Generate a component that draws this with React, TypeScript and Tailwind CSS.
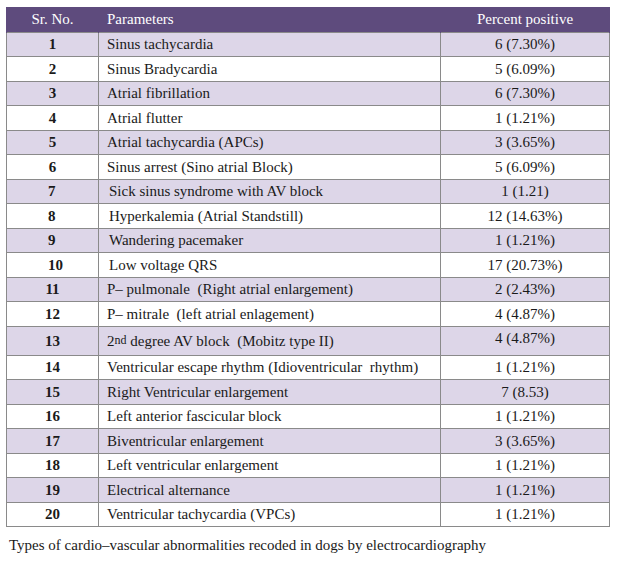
const rows: [string, React.ReactNode, string][] = [
  ["1", "Sinus tachycardia", "6 (7.30%)"],
  ["2", "Sinus Bradycardia", "5 (6.09%)"],
  ["3", "Atrial fibrillation", "6 (7.30%)"],
  ["4", "Atrial flutter", "1 (1.21%)"],
  ["5", "Atrial tachycardia (APCs)", "3 (3.65%)"],
  ["6", "Sinus arrest (Sino atrial Block)", "5 (6.09%)"],
  ["7", "Sick sinus syndrome with AV block", "1 (1.21)"],
  ["8", "Hyperkalemia (Atrial Standstill)", "12 (14.63%)"],
  ["9", "Wandering pacemaker", "1 (1.21%)"],
  ["10", "Low voltage QRS", "17 (20.73%)"],
  ["11", "P– pulmonale  (Right atrial enlargement)", "2 (2.43%)"],
  ["12", "P– mitrale  (left atrial enlagement)", "4 (4.87%)"],
  [
    "13",
    <>
      2<sup className="text-[12px] relative -top-[2px]">nd</sup> degree AV block  (Mobitz type II)
    </>,
    "4 (4.87%)",
  ],
  ["14", "Ventricular escape rhythm (Idioventricular  rhythm)", "1 (1.21%)"],
  ["15", "Right Ventricular enlargement", "7 (8.53)"],
  ["16", "Left anterior fascicular block", "1 (1.21%)"],
  ["17", "Biventricular enlargement", "3 (3.65%)"],
  ["18", "Left ventricular enlargement", "1 (1.21%)"],
  ["19", "Electrical alternance", "1 (1.21%)"],
  ["20", "Ventricular tachycardia (VPCs)", "1 (1.21%)"],
]

export default function App() {
  return (
    <div className="w-[618px] h-[566px] bg-white pt-[7px] px-[6px] text-[#1a1a1a] font-['Liberation_Serif',serif] text-[15px] leading-[18px]">
      <table className="w-[604px] border-collapse">
        <thead>
          <tr className="bg-[#5e4b7d] text-white h-[25px]">
            <th className="w-[92px] font-normal text-center border-x border-[#5e4b7d]">Sr. No.</th>
            <th className="w-[342px] font-normal text-left pl-[8px]">Parameters</th>
            <th className="font-normal text-center border-x border-[#5e4b7d]">Percent positive</th>
          </tr>
        </thead>
        <tbody>
          {rows.map(([no, name, pct], i) => {
            const n = i + 1
            const shifted = n >= 7 && n <= 10
            return (
              <tr key={no} className={`${i % 2 === 0 ? "bg-[#ddd6e8]" : "bg-white"} ${n === 13 ? "h-[29px]" : "h-[24.5px]"}`}>
                <td
                  className={`border border-[#8a8a8a] font-bold ${shifted ? "text-left pl-[41px]" : "text-center"}`}
                >
                  {no}
                </td>
                <td className={`border border-[#8a8a8a] whitespace-pre ${shifted ? "pl-[10px]" : "pl-[8px]"}`}>{name}</td>
                <td className={`border border-[#8a8a8a] text-center ${n === 13 ? "align-top pt-[2px]" : ""}`}>{pct}</td>
              </tr>
            )
          })}
        </tbody>
      </table>
      <p className="mt-[9px] pl-[3px] text-[15px]">
        Types of cardio–vascular abnormalities recoded in dogs by electrocardiography
      </p>
    </div>
  )
}
